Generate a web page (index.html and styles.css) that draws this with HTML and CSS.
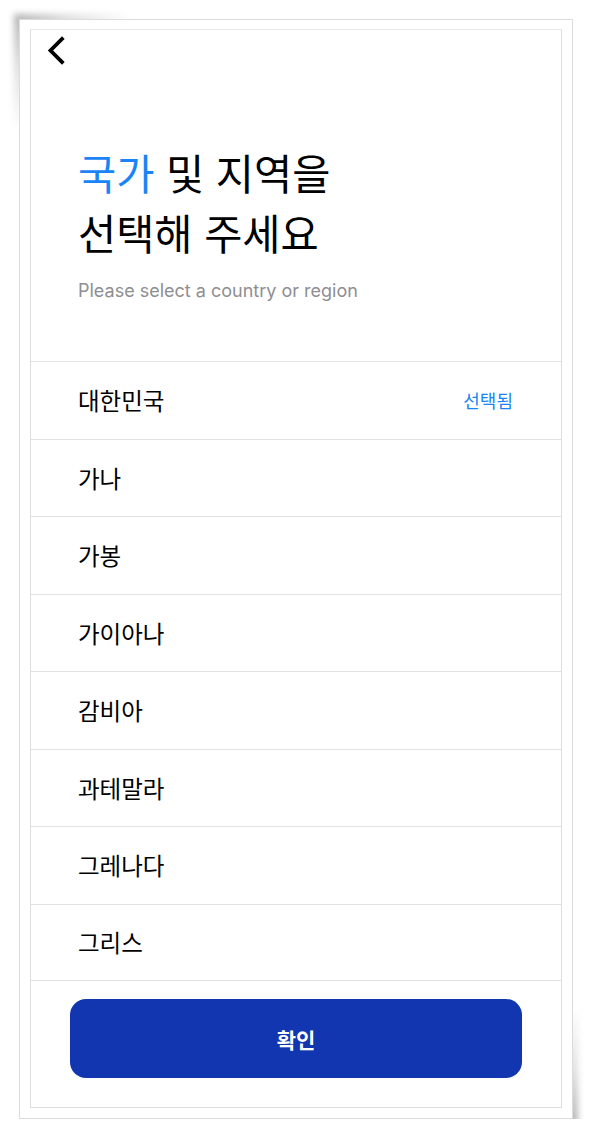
FILE: index.html
```html
<!DOCTYPE html>
<html lang="ko">
<head>
<meta charset="utf-8">
<title>국가 및 지역 선택</title>
<link rel="stylesheet" href="styles.css">
</head>
<body>
<div class="device">
  <div class="screen">
    <div class="header">
      <svg class="back" width="20" height="30" viewBox="0 0 20 30">
        <polyline points="15,4 3.5,15.5 15,27" fill="none" stroke="#000" stroke-width="3.8" stroke-linecap="square" stroke-linejoin="miter"/>
      </svg>
    </div>
    <div class="intro">
      <h1 class="title"><span class="accent">국가</span> 및 지역을<br>선택해 주세요</h1>
      <p class="subtitle">Please select a country or region</p>
    </div>
    <ul class="list">
      <li class="row"><span>대한민국</span><span class="selected">선택됨</span></li>
      <li class="row"><span>가나</span></li>
      <li class="row"><span>가봉</span></li>
      <li class="row"><span>가이아나</span></li>
      <li class="row"><span>감비아</span></li>
      <li class="row"><span>과테말라</span></li>
      <li class="row"><span>그레나다</span></li>
      <li class="row"><span>그리스</span></li>
    </ul>
    <div class="footer">
      <button class="confirm">확인</button>
    </div>
  </div>
</div>
</body>
</html>
```

FILE: styles.css
```css
html {
  background: #fff;
}
body {
  margin: 0;
  padding: 0;
  font-family: "Noto Sans CJK KR", "Noto Sans", sans-serif;
  color: #000;
}
.device {
  position: relative;
  margin: 19px 0 0 19px;
  width: 554px;
  height: 1100px;
  box-sizing: border-box;
  border: 1px solid #dcdcdc;
  background: #fff;
  padding: 9px 10px 10px 10px;
}
.device::before {
  content: "";
  position: absolute;
  left: -6px;
  top: -6px;
  width: 160px;
  height: 160px;
  background: linear-gradient(135deg, rgba(0, 0, 0, 0.3) 0%, rgba(0, 0, 0, 0.12) 18%, rgba(0, 0, 0, 0) 38%);
  filter: blur(3px);
  z-index: -1;
}
.device::after {
  content: "";
  position: absolute;
  right: -6px;
  bottom: -6px;
  width: 160px;
  height: 160px;
  background: linear-gradient(315deg, rgba(0, 0, 0, 0.3) 0%, rgba(0, 0, 0, 0.12) 18%, rgba(0, 0, 0, 0) 38%);
  filter: blur(3px);
  z-index: -1;
}
.screen {
  height: 100%;
  box-sizing: border-box;
  border: 1px solid #dedede;
  border-top-color: #e8e8e8;
  display: flex;
  flex-direction: column;
}
.header {
  height: 45px;
  padding-left: 16px;
  padding-top: 5px;
  box-sizing: border-box;
}
.back {
  display: block;
}
.intro {
  padding: 0 47px;
  height: 286px;
  box-sizing: border-box;
  padding-top: 67px;
}
.title {
  margin: 0;
  font-size: 41.5px;
  line-height: 60px;
  font-weight: 400;
  letter-spacing: 0;
}
.accent {
  color: #1a84f7;
}
.subtitle {
  margin: 17px 0 0;
  font-family: "Inter", "Noto Sans", sans-serif;
  font-size: 18px;
  color: #8e8e93;
  line-height: 24px;
}
.list {
  list-style: none;
  margin: 0;
  padding: 0;
}
.row {
  height: 77.5px;
  box-sizing: border-box;
  border-top: 1px solid #e2e2e2;
  display: flex;
  align-items: center;
  justify-content: space-between;
  padding: 0 48px 0 47px;
  font-size: 23.5px;
}
.row:last-child {
  border-bottom: 1px solid #e2e2e2;
}
.selected {
  color: #1a84f7;
  font-size: 18px;
}
.footer {
  padding: 18px 39px 0;
}
.confirm {
  display: block;
  width: 100%;
  height: 79px;
  border: none;
  border-radius: 16px;
  background: #1235b0;
  color: #fff;
  font-family: "Noto Sans CJK KR", sans-serif;
  font-size: 21px;
  font-weight: 700;
}
```
